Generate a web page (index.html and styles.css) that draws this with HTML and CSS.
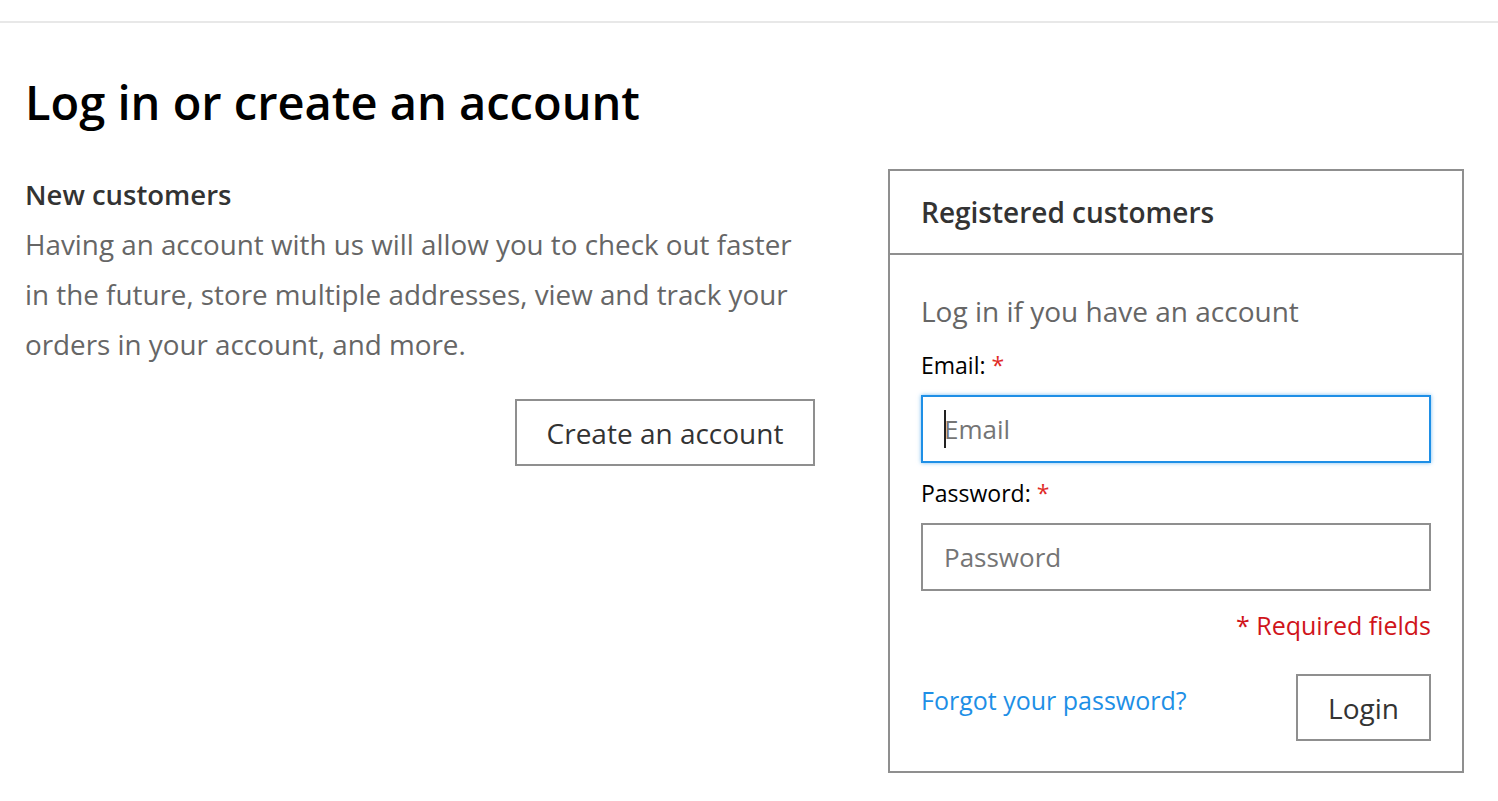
FILE: index.html
```html
<!DOCTYPE html>
<html lang="en">
<head>
<meta charset="utf-8">
<title>Customer Login</title>
<link rel="stylesheet" href="styles.css">
</head>
<body>
<header class="topbar"></header>
<main class="page">
  <h1 class="page-title">Log in or create an account</h1>
  <div class="columns">
    <section class="new-customers">
      <h2 class="block-title">New customers</h2>
      <p class="intro">Having an account with us will allow you to check out faster in the future, store multiple addresses, view and track your orders in your account, and more.</p>
      <div class="actions-right">
        <a class="btn btn-create" href="#">Create an account</a>
      </div>
    </section>
    <section class="registered">
      <div class="registered-head">Registered customers</div>
      <form class="registered-body">
        <p class="login-note">Log in if you have an account</p>
        <label class="field-label" for="email">Email: <span class="req">*</span></label>
        <div class="input focused"><span class="caret"></span><span class="placeholder">Email</span></div>
        <label class="field-label" for="pass">Password: <span class="req">*</span></label>
        <div class="input"><span class="placeholder">Password</span></div>
        <div class="required-note">* Required fields</div>
        <div class="form-actions">
          <a class="forgot" href="#">Forgot your password?</a>
          <a class="btn btn-login" href="#">Login</a>
        </div>
      </form>
    </section>
  </div>
</main>
</body>
</html>
```
FILE: styles.css
```css
* { box-sizing: border-box; }
html, body { margin: 0; padding: 0; background: #fff; }
body {
  font-family: "Open Sans", "Liberation Sans", sans-serif;
  color: #333;
  width: 1498px;
  height: 801px;
  overflow: hidden;
}
.topbar {
  height: 23px;
  border-bottom: 2px solid #e8e8e8;
}
.page {
  padding: 0 34px 0 25px;
}
.page-title {
  margin: 50px 0 0 0;
  font-size: 47px;
  font-weight: 600;
  line-height: 58px;
  color: #000;
}
.columns {
  display: flex;
  justify-content: space-between;
  align-items: flex-start;
  margin-top: 38px;
}
.new-customers {
  width: 790px;
  padding-top: 8px;
}
.block-title {
  margin: 0 0 6px 0;
  font-size: 27.5px;
  font-weight: 600;
  line-height: 36px;
  color: #333;
}
.intro {
  margin: 0;
  font-size: 27.8px;
  line-height: 50px;
  color: #666;
}
.actions-right {
  display: flex;
  justify-content: flex-end;
  margin-top: 30px;
}
.btn {
  display: inline-flex;
  align-items: center;
  justify-content: center;
  border: 2px solid #8f8f8f;
  color: #333;
  text-decoration: none;
  background: #fff;
  font-size: 28px;
}
.btn-create {
  width: 300px;
  height: 67px;
}
.registered {
  width: 576px;
  border: 2px solid #8f8f8f;
}
.registered-head {
  height: 84px;
  border-bottom: 2px solid #8f8f8f;
  padding: 0 31px;
  display: flex;
  align-items: center;
  font-size: 28px;
  font-weight: 600;
  color: #333;
}
.registered-body {
  padding: 30px 31px 30px 31px;
}
.login-note {
  margin: 0;
  font-size: 28px;
  line-height: 52px;
  color: #666;
}
.field-label {
  display: block;
  font-size: 23px;
  line-height: 40px;
  color: #000;
  margin-top: 5px;
}
.login-note + .field-label { margin-top: 8px; }
.req { color: #e02b27; }
.input {
  height: 68px;
  border: 2px solid #8f8f8f;
  margin: 10px 0 10px 0;
  display: flex;
  align-items: center;
  padding-left: 21px;
  font-size: 26px;
  position: relative;
}
.input.focused {
  border-color: #1e8fe6;
  box-shadow: 0 0 4px rgba(30, 143, 230, 0.6);
}
.placeholder { color: #757575; }
.caret {
  position: absolute;
  left: 21px;
  top: 13px;
  width: 2px;
  height: 38px;
  background: #222;
}
.required-note {
  text-align: right;
  font-size: 25px;
  line-height: 40px;
  color: #d0141b;
  margin-top: 14px;
}
.form-actions {
  display: flex;
  justify-content: space-between;
  align-items: flex-start;
  margin-top: 29px;
}
.forgot {
  font-size: 25px;
  color: #1e8fe6;
  text-decoration: none;
  line-height: 52px;
}
.btn-login {
  width: 135px;
  height: 67px;
  font-size: 28px;
}
```
